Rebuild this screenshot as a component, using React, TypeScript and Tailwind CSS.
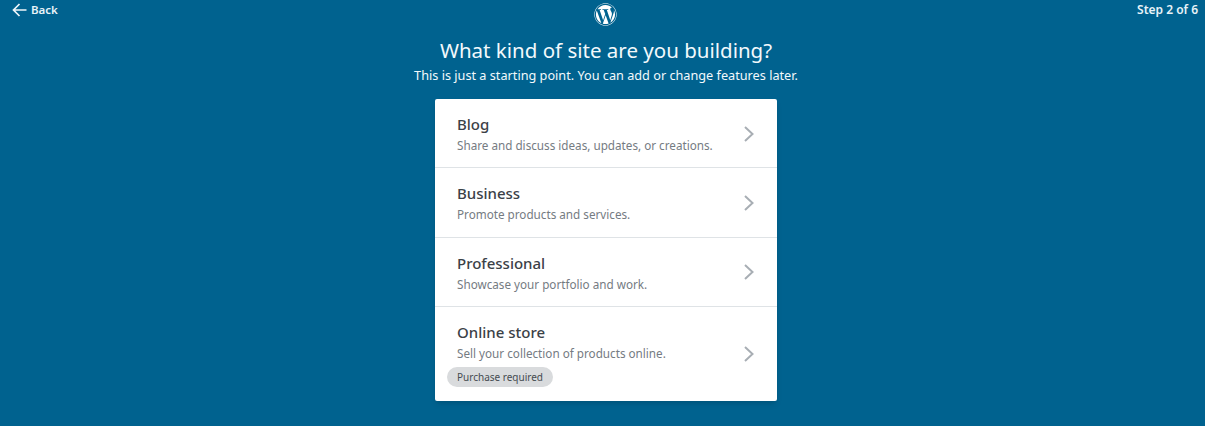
import React from 'react';
import { FaWordpress } from 'react-icons/fa';

const siteTypes = [
  { title: 'Blog', description: 'Share and discuss ideas, updates, or creations.' },
  { title: 'Business', description: 'Promote products and services.' },
  { title: 'Professional', description: 'Showcase your portfolio and work.' },
  { title: 'Online store', description: 'Sell your collection of products online.', badge: 'Purchase required' },
];

const Chevron: React.FC = () => (
  <svg width="12" height="18" viewBox="0 0 12 18" fill="none" className="mt-[1px] shrink-0">
    <path d="M2 2l7.5 7L2 16" stroke="#a8aeb4" strokeWidth="2" />
  </svg>
);

const App: React.FC = () => {
  return (
    <div className="h-[426px] w-full overflow-hidden bg-[#00628f] font-['Noto_Sans',sans-serif] text-white">
      {/* Top bar */}
      <header className="grid h-[29px] grid-cols-[1fr_auto_1fr] items-start pr-[7px] pl-3">
        <button className="mt-[2px] flex items-center gap-[4px] justify-self-start text-[11.5px] leading-[16px] font-semibold text-[#e8f3f8]">
          <svg width="15" height="14" viewBox="0 0 15 14" fill="none">
            <path d="M14.5 7H1.5M7.5 1L1.5 7l6 6" stroke="#eef6fa" strokeWidth="1.7" />
          </svg>
          Back
        </button>
        <FaWordpress className="mt-[3px] ml-[1px] text-[23px] text-white" />
        <span className="mt-[2px] justify-self-end text-[12px] leading-[16px] font-semibold text-[#e8f3f8]">Step 2 of 6</span>
      </header>

      <main className="pl-[7px]">
        {/* Heading */}
        <div className="mt-[6px] text-center">
          <h1 className="text-[20.5px] leading-[30px] font-normal text-[#f2f9fc]">What kind of site are you building?</h1>
          <p className="mt-[1px] text-[12.7px] leading-[18px] text-[#f2f9fc]">
            This is just a starting point. You can add or change features later.
          </p>
        </div>

        {/* Site type list */}
        <div className="mx-auto mt-[15px] w-[342px] rounded-[2px] bg-white shadow-md">
          {siteTypes.map((site, i) => (
            <div
              key={site.title}
              className={`flex items-center justify-between pr-[22px] pl-[22px] ${
                i < siteTypes.length - 1 ? 'h-[69.3px] border-b border-[#dfe3e6]' : 'h-[94px]'
              }`}
            >
              <div className={site.badge ? '-mt-[1px] self-start pt-[16px]' : 'pt-[2px]'}>
                <div className="text-[15px] leading-[20px] font-medium text-[#3b4147]">{site.title}</div>
                <div className="mt-[2px] text-[11.7px] leading-[18px] text-[#757b82]">{site.description}</div>
                {site.badge && (
                  <span className="mt-[5px] -ml-[10px] inline-block rounded-full bg-[#d9dbdd] px-[10px] text-[10px] leading-[20px] text-[#454b51]">
                    {site.badge}
                  </span>
                )}
              </div>
              <Chevron />
            </div>
          ))}
        </div>
      </main>
    </div>
  );
};

export default App;
